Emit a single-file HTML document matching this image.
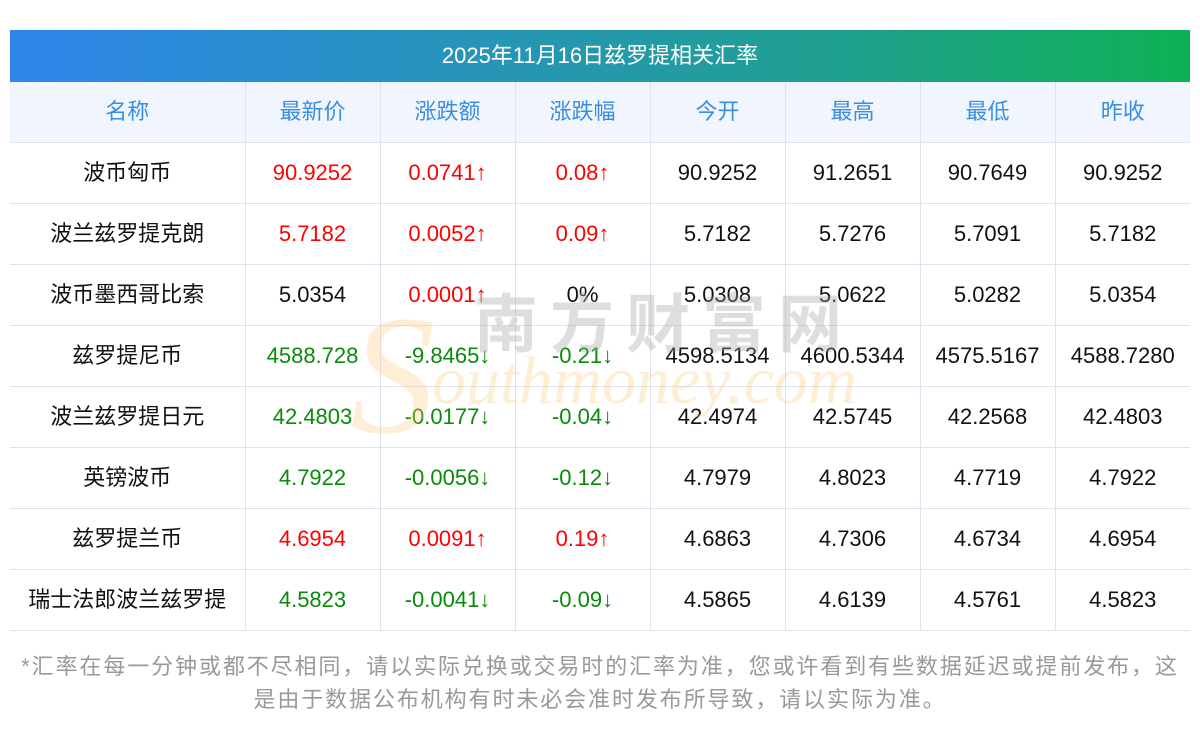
<!DOCTYPE html>
<html><head><meta charset="utf-8"><style>
body{margin:0;width:1200px;height:733px;background:#fff;font-family:"Liberation Sans","Noto Sans CJK SC",sans-serif;position:relative;overflow:hidden}
.title{position:absolute;left:10px;top:30px;width:1180px;height:52px;background:linear-gradient(90deg,#2f86ec,#20a090 70%,#0fb054);color:#fff;font-size:22px;line-height:52px;text-align:center}
table{position:absolute;left:10px;top:82px;width:1180px;border-collapse:collapse;table-layout:fixed;z-index:2}
td{height:60px;border:1px solid #dde2ec;text-align:center;font-size:22px;line-height:24px;color:#111;padding:0;vertical-align:middle}
tr td:first-child{border-left:none}tr td:last-child{border-right:none}
tr:first-child td{border-top:none;background:#f1f6fe;color:#3a8de0}
.r{color:#f00}.g{color:#0a8a0a}
.foot{position:absolute;left:0;top:650px;width:1200px;text-align:center;color:#999;font-size:22px;letter-spacing:1.9px;line-height:33px}
.wm1{position:absolute;left:474px;top:290px;font-size:64px;color:rgba(160,160,160,.35);letter-spacing:12px;z-index:3;font-weight:bold;line-height:70px}
.wm2{position:absolute;left:432px;top:345px;font-size:68px;color:rgba(252,200,120,.3);font-style:italic;font-family:"Liberation Serif",serif;z-index:3;line-height:70px}
.wmS{position:absolute;left:350px;top:290px;font-size:170px;color:rgba(252,200,120,.3);font-style:italic;font-family:"Liberation Serif",serif;z-index:3;line-height:1}
</style></head><body>
<div class="title">2025年11月16日兹罗提相关汇率</div>
<table>
<colgroup><col style="width:235px"><col style="width:135px"><col style="width:135px"><col style="width:135px"><col style="width:135px"><col style="width:135px"><col style="width:135px"><col style="width:135px"></colgroup>
<tr><td>名称</td><td>最新价</td><td>涨跌额</td><td>涨跌幅</td><td>今开</td><td>最高</td><td>最低</td><td>昨收</td></tr>
<tr><td>波币匈币</td><td class="r">90.9252</td><td class="r">0.0741↑</td><td class="r">0.08↑</td><td>90.9252</td><td>91.2651</td><td>90.7649</td><td>90.9252</td></tr>
<tr><td>波兰兹罗提克朗</td><td class="r">5.7182</td><td class="r">0.0052↑</td><td class="r">0.09↑</td><td>5.7182</td><td>5.7276</td><td>5.7091</td><td>5.7182</td></tr>
<tr><td>波币墨西哥比索</td><td>5.0354</td><td class="r">0.0001↑</td><td>0%</td><td>5.0308</td><td>5.0622</td><td>5.0282</td><td>5.0354</td></tr>
<tr><td>兹罗提尼币</td><td class="g">4588.728</td><td class="g">-9.8465↓</td><td class="g">-0.21↓</td><td>4598.5134</td><td>4600.5344</td><td>4575.5167</td><td>4588.7280</td></tr>
<tr><td>波兰兹罗提日元</td><td class="g">42.4803</td><td class="g">-0.0177↓</td><td class="g">-0.04↓</td><td>42.4974</td><td>42.5745</td><td>42.2568</td><td>42.4803</td></tr>
<tr><td>英镑波币</td><td class="g">4.7922</td><td class="g">-0.0056↓</td><td class="g">-0.12↓</td><td>4.7979</td><td>4.8023</td><td>4.7719</td><td>4.7922</td></tr>
<tr><td>兹罗提兰币</td><td class="r">4.6954</td><td class="r">0.0091↑</td><td class="r">0.19↑</td><td>4.6863</td><td>4.7306</td><td>4.6734</td><td>4.6954</td></tr>
<tr><td>瑞士法郎波兰兹罗提</td><td class="g">4.5823</td><td class="g">-0.0041↓</td><td class="g">-0.09↓</td><td>4.5865</td><td>4.6139</td><td>4.5761</td><td>4.5823</td></tr>
</table>
<div class="wmS">S</div>
<div class="wm1">南方财富网</div>
<div class="wm2">outhmoney.com</div>
<div class="foot">*汇率在每一分钟或都不尽相同，请以实际兑换或交易时的汇率为准，您或许看到有些数据延迟或提前发布，这<br>是由于数据公布机构有时未必会准时发布所导致，请以实际为准。</div>
</body></html>
